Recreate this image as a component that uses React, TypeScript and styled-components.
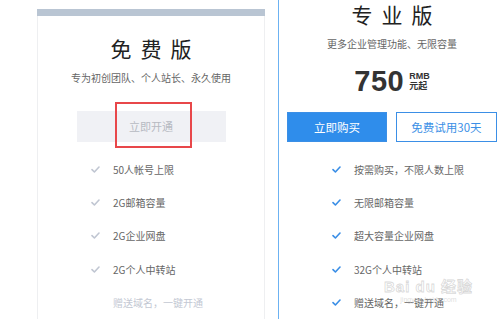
import React from "react";
import styled, { createGlobalStyle } from "styled-components";

const GlobalStyle = createGlobalStyle`
  html, body {
    margin: 0;
    padding: 0;
    background: #fff;
  }
  body {
    font-family: "Noto Sans CJK SC", "Liberation Sans", sans-serif;
  }
`;

const Page = styled.div`
  width: 500px;
  height: 319px;
  overflow: hidden;
  display: flex;
  align-items: flex-start;
  gap: 13px;
  padding-left: 37px;
  box-sizing: border-box;
  position: relative;
`;

const Card = styled.div<{ $featured?: boolean }>`
  flex: 0 0 228px;
  height: ${(p) => (p.$featured ? "319px" : "310px")};
  margin-top: ${(p) => (p.$featured ? "0" : "9px")};
  box-sizing: border-box;
  border-left: 1px solid ${(p) => (p.$featured ? "#6cb2f2" : "#eeeff1")};
  border-right: 1px solid ${(p) => (p.$featured ? "transparent" : "#eeeff1")};
  display: flex;
  flex-direction: column;
`;

const TopBar = styled.div`
  height: 7px;
  margin-left: -1px;
  margin-right: -1px;
  background: #b9c5d3;
`;

const Head = styled.div<{ $h: number }>`
  height: ${(p) => p.$h}px;
  display: flex;
  flex-direction: column;
  align-items: center;
`;

const Title = styled.h2<{ $top: number }>`
  margin: ${(p) => p.$top}px 0 0 9px;
  font-size: 21px;
  line-height: 28px;
  font-weight: 400;
  letter-spacing: 9px;
  color: #222;
`;

const Sub = styled.p<{ $top: number }>`
  margin: ${(p) => p.$top}px 0 0;
  font-size: 10px;
  line-height: 16px;
  color: #666;
`;

const Price = styled.div`
  margin-top: 14px;
  display: flex;
  align-items: center;
  gap: 5px;
  color: #333;
`;

const Amount = styled.span`
  font-family: "Liberation Sans", sans-serif;
  font-size: 29px;
  line-height: 30px;
  font-weight: 700;
  letter-spacing: 0.5px;
`;

const Unit = styled.span`
  display: flex;
  flex-direction: column;
  font-size: 9px;
  line-height: 10px;
  font-weight: 700;
  font-family: "Liberation Sans", "Noto Sans CJK SC", sans-serif;
`;

const Actions = styled.div`
  display: flex;
  justify-content: center;
  gap: 9px;
  height: 31px;
`;

const Button = styled.button<{ $variant: "muted" | "primary" | "outline"; $w: number }>`
  position: relative;
  width: ${(p) => p.$w}px;
  height: ${(p) => (p.$variant === "muted" ? 31 : 30)}px;
  box-sizing: border-box;
  font-family: "Noto Sans CJK SC", sans-serif;
  font-size: ${(p) => (p.$variant === "muted" ? 11 : 11.5)}px;
  border-radius: 0;
  padding: 0;
  cursor: pointer;
  background: ${(p) =>
    p.$variant === "primary" ? "#2f8deb" : p.$variant === "outline" ? "#fff" : "#f0f1f5"};
  color: ${(p) =>
    p.$variant === "primary" ? "#fff" : p.$variant === "outline" ? "#3b8fe6" : "#b7bac2"};
  border: 1px solid
    ${(p) => (p.$variant === "muted" ? "#f0f1f5" : "#3b8fe6")};
`;

const Highlight = styled.span`
  position: absolute;
  left: 37px;
  top: -10px;
  width: 77px;
  height: 46px;
  box-sizing: border-box;
  border: 2px solid #e8474a;
`;

const List = styled.ul`
  list-style: none;
  margin: 11px 0 0;
  padding: 0;
`;

const Item = styled.li<{ $faint?: boolean }>`
  height: 33.3px;
  display: flex;
  align-items: center;
  padding-left: 53px;
  font-size: 10px;
  color: ${(p) => (p.$faint ? "#c3c8d3" : "#666")};
`;

const CheckBox = styled.span`
  width: 22px;
  display: flex;
  align-items: center;
`;

const Watermark = styled.div`
  position: absolute;
  left: 384px;
  top: 278px;
  display: flex;
  flex-direction: column;
  align-items: center;
  pointer-events: none;
  white-space: nowrap;
`;

const MarkText = styled.span`
  font-family: "Liberation Sans", "Noto Sans CJK SC", sans-serif;
  font-size: 15px;
  line-height: 17px;
  font-weight: 700;
  color: rgba(255, 255, 255, 0.6);
  -webkit-text-stroke: 0.8px rgba(185, 185, 185, 0.55);
  letter-spacing: 1px;
`;

const MarkUrl = styled.span`
  font-family: "Liberation Sans", sans-serif;
  font-size: 7px;
  line-height: 9px;
  color: rgba(200, 200, 200, 0.6);
`;

function Check({ color }: { color: string }) {
  return (
    <CheckBox>
      <svg width="9" height="7" viewBox="0 0 9 7">
        <polyline points="1,3.6 3.4,6 8,1" fill="none" stroke={color} strokeWidth="1.6" strokeLinecap="round" strokeLinejoin="round" />
      </svg>
    </CheckBox>
  );
}

const freeFeatures = ["50人帐号上限", "2G邮箱容量", "2G企业网盘", "2G个人中转站"];
const proFeatures = ["按需购买，不限人数上限", "无限邮箱容量", "超大容量企业网盘", "32G个人中转站", "赠送域名，一键开通"];

export default function App() {
  return (
    <>
      <GlobalStyle />
      <Page>
        <Card>
          <TopBar />
          <Head $h={100}>
            <Title $top={18}>免费版</Title>
            <Sub $top={8}>专为初创团队、个人站长、永久使用</Sub>
          </Head>
          <Actions>
            <Button $variant="muted" $w={149}>
              立即开通
              <Highlight />
            </Button>
          </Actions>
          <List>
            {freeFeatures.map((f) => (
              <Item key={f}>
                <Check color="#c0c6d2" />
                {f}
              </Item>
            ))}
            <Item $faint>
              <CheckBox />
              赠送域名，一键开通
            </Item>
          </List>
        </Card>
        <Card $featured>
          <Head $h={116}>
            <Title $top={0}>专业版</Title>
            <Sub $top={8}>更多企业管理功能、无限容量</Sub>
            <Price>
              <Amount>750</Amount>
              <Unit>
                <span>RMB</span>
                <span>元起</span>
              </Unit>
            </Price>
          </Head>
          <Actions>
            <Button $variant="primary" $w={100}>立即购买</Button>
            <Button $variant="outline" $w={101}>免费试用30天</Button>
          </Actions>
          <List>
            {proFeatures.map((f) => (
              <Item key={f}>
                <Check color="#3a8ee6" />
                {f}
              </Item>
            ))}
          </List>
        </Card>
        <Watermark>
          <MarkText>Bai du 经验</MarkText>
          <MarkUrl>jingyan.baidu.com</MarkUrl>
        </Watermark>
      </Page>
    </>
  );
}
